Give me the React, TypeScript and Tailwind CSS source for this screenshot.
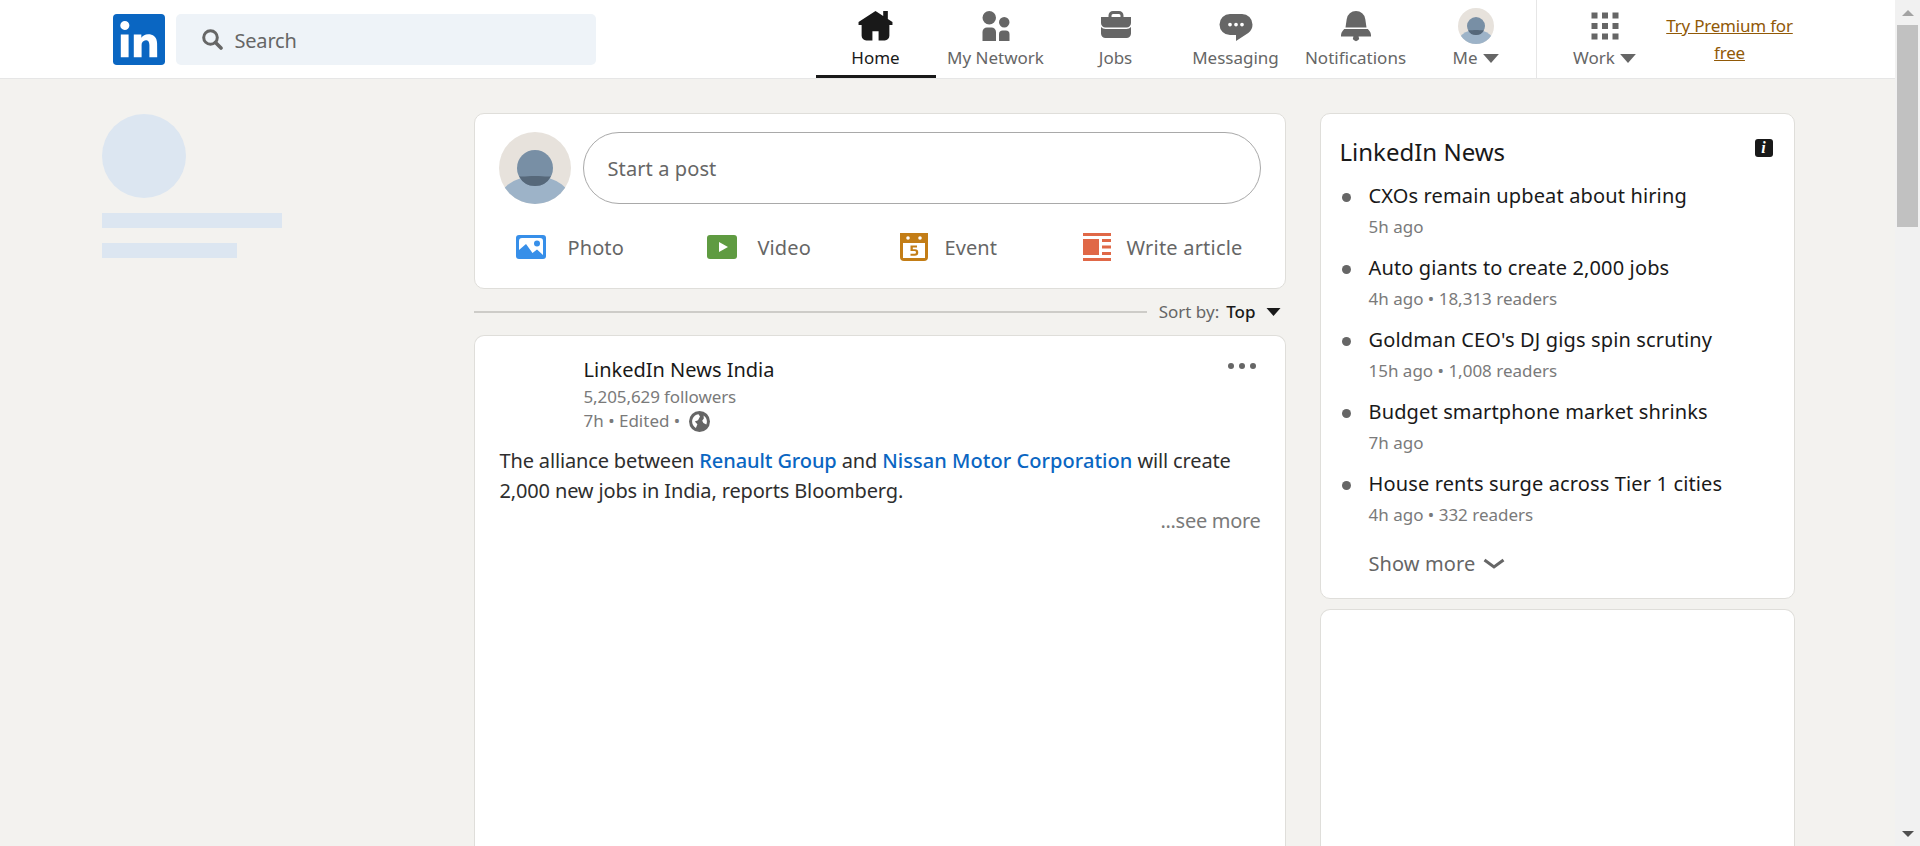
import React from "react";

const FONT = "font-['Noto_Sans','Open_Sans',sans-serif]";

function Icon({ d, className }: { d: string; className?: string }) {
  return (
    <svg viewBox="0 0 24 24" className={className} fill="currentColor">
      <path d={d} />
    </svg>
  );
}

const paths = {
  home: "M23 9v2h-2v7a3 3 0 01-3 3h-4v-6h-4v6H6a3 3 0 01-3-3v-7H1V9l11-7 5 3.18V2h3v5.09z",
  net: "M12 16v6H3v-6a3 3 0 013-3h3a3 3 0 013 3zm5.5-3A3.5 3.5 0 1014 9.5a3.5 3.5 0 003.5 3.5zm1 2h-2a2.5 2.5 0 00-2.5 2.5V22h7v-4.5a2.5 2.5 0 00-2.5-2.5zM7.5 2A4.5 4.5 0 1012 6.5 4.49 4.49 0 007.5 2z",
  jobs: "M17 6V5a3 3 0 00-3-3h-4a3 3 0 00-3 3v1H2v4a3 3 0 003 3h14a3 3 0 003-3V6zM9 5a1 1 0 011-1h4a1 1 0 011 1v1H9zm10 9a4 4 0 003-1.38V17a3 3 0 01-3 3H5a3 3 0 01-3-3v-4.38A4 4 0 005 14z",
  msg: "M16 4H8a7 7 0 000 14h4v4l8.16-5.39A6.78 6.78 0 0023 11a7 7 0 00-7-7zm-8 8.25A1.25 1.25 0 119.25 11 1.25 1.25 0 018 12.25zm4 0A1.25 1.25 0 1113.25 11 1.25 1.25 0 0112 12.25zm4 0A1.25 1.25 0 1117.25 11 1.25 1.25 0 0116 12.25z",
  bell: "M22 19h-8.28a2 2 0 11-3.44 0H2v-1a4.52 4.52 0 011.17-2.83l1-1.17h15.7l1 1.17A4.42 4.42 0 0122 18zM18.21 7.44A6.27 6.27 0 0012 2a6.27 6.27 0 00-6.21 5.44L5 13h14z",
  work: "M3 3h4v4H3zm7 4h4V3h-4zm7-4v4h4V3zM3 14h4v-4H3zm7 0h4v-4h-4zm7 0h4v-4h-4zM3 21h4v-4H3zm7 0h4v-4h-4zm7 0h4v-4h-4z",
};

function Avatar({ className, id }: { className?: string; id: string }) {
  return (
    <svg viewBox="0 0 72 72" className={className}>
      <defs>
        <clipPath id={id}>
          <circle cx="36" cy="36" r="36" />
        </clipPath>
      </defs>
      <g clipPath={`url(#${id})`}>
        <rect width="72" height="72" fill="#e7e2dc" />
        <ellipse cx="36" cy="73" rx="38" ry="29" fill="#9db3c8" />
        <circle cx="36" cy="36" r="18" fill="#788fa5" />
        <path d="M20 44.3 C 24 45 29 44 36 44 C 43 44 48 45 52 44.3 A 18 18 0 0 1 20 44.3 Z" fill="#56687a" />
      </g>
    </svg>
  );
}

function Caret({ className }: { className?: string }) {
  return (
    <svg viewBox="0 0 14 8" className={className} fill="currentColor">
      <path d="M0 0h14L7 8z" />
    </svg>
  );
}

function NavItem({ icon, label, active }: { icon: React.ReactNode; label: React.ReactNode; active?: boolean }) {
  return (
    <div className={`w-[120px] h-[78px] flex flex-col items-center pt-[10px] border-b-[3px] ${active ? "border-[#191919] text-[#191919]" : "border-transparent text-[#666666]"}`}>
      <div className="h-[32px] flex items-center justify-center">{icon}</div>
      <div className="mt-[4px] text-[17px] leading-[24px] flex items-center gap-[5px] whitespace-nowrap">{label}</div>
    </div>
  );
}

function Header() {
  return (
    <header className="h-[79px] bg-white border-b border-[#e6e6e6] shrink-0">
      <div className="w-[1692px] mx-auto flex h-[78px]">
        <div className="ml-[11px] mt-[14px] w-[52px] h-[51px] shrink-0">
          <svg viewBox="2 2 20 20" preserveAspectRatio="none" className="w-[52px] h-[51px]">
            <path fill="#0a66c2" d="M20.5 2h-17A1.5 1.5 0 002 3.5v17A1.5 1.5 0 003.5 22h17a1.5 1.5 0 001.5-1.5v-17A1.5 1.5 0 0020.5 2z" />
            <path fill="#fff" d="M8 19H5v-9h3zM6.5 8.25A1.75 1.75 0 118.3 6.5a1.78 1.78 0 01-1.8 1.75zM19 19h-3v-4.74c0-1.42-.6-1.93-1.38-1.93A1.74 1.74 0 0013 14.19a.66.66 0 000 .14V19h-3v-9h2.9v1.3a3.11 3.11 0 012.7-1.4c1.55 0 3.36.86 3.36 3.66z" />
          </svg>
        </div>
        <div className="ml-[11px] mt-[14px] w-[420px] h-[51px] shrink-0 bg-[#eef3f8] rounded-[5px] flex items-center pl-[26px] text-[#666666]">
          <svg viewBox="0 0 21 21" className="w-[21px] h-[21px]" fill="none" stroke="#666666">
            <circle cx="8.5" cy="8.5" r="6.8" strokeWidth="3" />
            <path d="M13.5 13.5 L19 19" strokeWidth="3.6" strokeLinecap="round" />
          </svg>
          <span className="ml-[12px] mt-[2px] text-[20px] tracking-[-0.2px]">Search</span>
        </div>
        <nav className="ml-[220px] flex shrink-0">
          <NavItem active label="Home" icon={<Icon d={paths.home} className="w-[37px] h-[37px]" />} />
          <NavItem label="My Network" icon={<Icon d={paths.net} className="w-[36px] h-[36px]" />} />
          <NavItem label="Jobs" icon={<Icon d={paths.jobs} className="w-[36px] h-[36px]" />} />
          <NavItem label="Messaging" icon={<Icon d={paths.msg} className="w-[36px] h-[36px]" />} />
          <NavItem label="Notifications" icon={<Icon d={paths.bell} className="w-[36px] h-[36px]" />} />
          <NavItem label={<>Me<Caret className="w-[16px] h-[9px]" /></>} icon={<Avatar id="av-small" className="w-[36px] h-[36px]" />} />
          <div className="border-l border-[#e6e6e6] w-[129px] pl-[8px]">
            <NavItem label={<>Work<Caret className="w-[16px] h-[9px]" /></>} icon={<Icon d={paths.work} className="w-[36px] h-[36px]" />} />
          </div>
        </nav>
        <a className="w-[130px] shrink-0 mt-[12px] text-center text-[17px] leading-[27px] text-[#915907] underline tracking-[-0.2px]">Try Premium for free</a>
      </div>
    </header>
  );
}

function Card({ className, children }: { className?: string; children?: React.ReactNode }) {
  return <section className={`bg-white border border-[#dfdeda] rounded-[10px] ${className ?? ""}`}>{children}</section>;
}

function PhotoIcon() {
  return (
    <svg viewBox="0 0 30 24" className="w-[30px] h-[24px]">
      <rect width="30" height="24" rx="3" fill="#378fe9" />
      <path d="M3 6 V15 L10 9 L16.5 18 L21 14.5 L27 20 V6 Q27 3 24 3 H6 Q3 3 3 6 Z" fill="#fff" />
      <circle cx="21" cy="8.5" r="3" fill="#378fe9" />
    </svg>
  );
}

function VideoIcon() {
  return (
    <svg viewBox="0 0 30 24" className="w-[30px] h-[24px]">
      <rect width="30" height="24" rx="3" fill="#5f9b41" />
      <path d="M12 7 L21 12 L12 17 Z" fill="#fff" />
    </svg>
  );
}

function EventIcon() {
  return (
    <svg viewBox="0 0 28 28" className="w-[28px] h-[28px]">
      <path d="M0 0 H28 V24 A4 4 0 0 1 24 28 H4 A4 4 0 0 1 0 24 Z" fill="#c37d16" />
      <rect x="3" y="10" width="22" height="15" fill="#fff" />
      <circle cx="8" cy="5" r="1.8" fill="#fff" />
      <circle cx="20" cy="5" r="1.8" fill="#fff" />
      <path d="M10.5 12.5 H17 V14.5 H12.8 V16.3 H15 A3.2 3.2 0 0 1 15 22.8 H10.5 V20.8 H14.6 A1.4 1.4 0 0 0 14.6 18 H10.5 Z" fill="#c37d16" />
    </svg>
  );
}

function ArticleIcon() {
  return (
    <svg viewBox="0 0 28 28" className="w-[28px] h-[28px]" fill="#e06847">
      <rect x="0" y="0" width="28" height="3" />
      <rect x="0" y="25" width="28" height="3" />
      <rect x="0" y="6" width="16" height="16" />
      <rect x="19" y="6" width="9" height="3" />
      <rect x="19" y="12.5" width="9" height="3" />
      <rect x="19" y="19" width="9" height="3" />
    </svg>
  );
}

function Action({ icon, label, className }: { icon: React.ReactNode; label: string; className?: string }) {
  return (
    <div className={`flex items-center text-[20px] text-[#666666] ${className ?? ""}`}>
      {icon}
      <span className="mt-[2px]">{label}</span>
    </div>
  );
}

function Globe() {
  return (
    <svg viewBox="0 0 21 21" className="w-[21px] h-[21px] ml-[9px]">
      <circle cx="10.5" cy="10.5" r="10.5" fill="#666666" />
      <path d="M9.5 3.2 C5.8 3.7 3.1 6.8 3.1 10.5 C3.1 13.2 4.6 15.6 6.9 16.9 L8.4 13.2 L5.8 10.4 L9 9.2 L11 5.4 Z" fill="#fff" />
      <path d="M14.6 4.4 C16.6 5.7 17.9 8 17.9 10.5 C17.9 11.6 17.7 12.6 17.3 13.5 L14.4 12 L13.2 9.8 L14.8 7.4 Z" fill="#fff" />
    </svg>
  );
}

function NewsItem({ title, sub }: { title: string; sub: string }) {
  return (
    <li className="flex h-[72px]">
      <span className="w-[9px] h-[9px] rounded-full bg-[#666666] ml-[21px] mt-[12px] shrink-0" />
      <div className="ml-[18px]">
        <div className="text-[20px] leading-[30px] text-[#191919] tracking-[0.14px] whitespace-nowrap">{title}</div>
        <div className="text-[17px] leading-[24px] mt-[4px] text-[#7a7a7a] whitespace-nowrap">{sub}</div>
      </div>
    </li>
  );
}

function Scrollbar() {
  return (
    <div className="w-[25px] shrink-0 bg-[#f1f1f1] flex flex-col items-center">
      <div className="h-[25px] flex items-center justify-center">
        <div className="w-0 h-0 border-x-[6px] border-x-transparent border-b-[6px] border-b-[#a3a3a3]" />
      </div>
      <div className="w-[21px] h-[202px] bg-[#c1c1c1]" />
      <div className="flex-1" />
      <div className="h-[25px] flex items-center justify-center">
        <div className="w-0 h-0 border-x-[6px] border-x-transparent border-t-[6px] border-t-[#505050]" />
      </div>
    </div>
  );
}

export default function App() {
  return (
    <div className={`h-[846px] overflow-hidden flex bg-[#f3f2ef] ${FONT}`}>
      <div className="flex-1 min-w-0 flex flex-col">
        <Header />
        <main className="w-[1692px] mx-auto flex pt-[34px] flex-1 min-h-0">
          <aside className="w-[372px] shrink-0 pt-px">
            <div className="w-[84px] h-[84px] rounded-full bg-[#dce6f1]" />
            <div className="mt-[15px] w-[180px] h-[15px] bg-[#dce6f1]" />
            <div className="mt-[15px] w-[135px] h-[15px] bg-[#dce6f1]" />
          </aside>

          <div className="w-[812px] shrink-0 flex flex-col">
            <Card className="h-[176px] px-[24px] pt-[18px]">
              <div className="flex gap-[12px]">
                <Avatar id="av-large" className="w-[72px] h-[72px] shrink-0" />
                <div className="flex-1 h-[72px] rounded-[36px] border border-[#a9a9a9] flex items-center pl-[24px] text-[20px] text-[#666666] tracking-[0.1px]">
                  <span className="mt-[2px]">Start a post</span>
                </div>
              </div>
              <div className="flex mt-[29px] h-[28px]">
                <Action className="ml-[17px] w-[191px] gap-[22px] tracking-[0.1px]" icon={<PhotoIcon />} label="Photo" />
                <Action className="w-[193px] gap-[21px] tracking-[0.1px]" icon={<VideoIcon />} label="Video" />
                <Action className="w-[183px] gap-[17px] tracking-[0.1px]" icon={<EventIcon />} label="Event" />
                <Action className="gap-[16px] tracking-[0.2px]" icon={<ArticleIcon />} label="Write article" />
              </div>
            </Card>

            <div className="h-[46px] flex items-center">
              <div className="flex-1 h-[2px] bg-[#cdccc8] mr-[12px]" />
              <span className="text-[17px] text-[#666666]">Sort by:</span>
              <span className="ml-[7px] text-[17px] text-[#191919] font-medium">Top</span>
              <Caret className="w-[15px] h-[8px] ml-[10px] mr-[5px] text-[#191919]" />
            </div>

            <Card className="flex-1 rounded-b-none border-b-0 relative pt-[20px]">
              <div className="ml-[109px]">
                <div className="text-[20px] leading-[28px] text-[#191919]">LinkedIn News India</div>
                <div className="mt-[1px] text-[17px] leading-[23px] text-[#7a7a7a] tracking-[-0.1px]">5,205,629 followers</div>
                <div className="mt-[1px] flex items-center text-[17px] leading-[24px] text-[#7a7a7a]">7h • Edited • <Globe /></div>
              </div>
              <div className="absolute right-[29px] top-[27px] flex gap-[5px]">
                <span className="w-[6px] h-[6px] rounded-full bg-[#666666]" />
                <span className="w-[6px] h-[6px] rounded-full bg-[#666666]" />
                <span className="w-[6px] h-[6px] rounded-full bg-[#666666]" />
              </div>
              <p className="mt-[13px] ml-[25px] mr-[24px] text-[20px] leading-[30px] text-[#2e2e2e] tracking-[-0.15px]">
                The alliance between <span className="text-[#0a66c2] font-medium tracking-[-0.1px]">Renault Group</span> and <span className="text-[#0a66c2] font-medium tracking-[0.05px]">Nissan Motor Corporation</span> will create
                <br />2,000 new jobs in India, reports Bloomberg.
              </p>
              <div className="mr-[24px] text-right text-[20px] leading-[30px] text-[#7a7a7a] tracking-[-0.3px]">...see more</div>
            </Card>
          </div>

          <div className="w-[475px] ml-[34px] shrink-0 flex flex-col gap-[10px]">
            <Card className="h-[486px] relative pt-[22px]">
              <div className="ml-[19px] text-[24px] leading-[32px] text-[#191919]">LinkedIn News</div>
              <div className="absolute right-[21px] top-[25px] w-[18px] h-[18px] rounded-[3px] bg-[#191919] text-white flex items-center justify-center text-[16px] font-bold italic leading-none font-['Liberation_Serif',serif]">i</div>
              <ul className="mt-[13px]">
                <NewsItem title="CXOs remain upbeat about hiring" sub="5h ago" />
                <NewsItem title="Auto giants to create 2,000 jobs" sub="4h ago • 18,313 readers" />
                <NewsItem title="Goldman CEO's DJ gigs spin scrutiny" sub="15h ago • 1,008 readers" />
                <NewsItem title="Budget smartphone market shrinks" sub="7h ago" />
                <NewsItem title="House rents surge across Tier 1 cities" sub="4h ago • 332 readers" />
              </ul>
              <div className="ml-[48px] mt-[8px] flex items-center text-[20px] leading-[30px] text-[#666666] tracking-[0.1px]">
                Show more
                <svg viewBox="0 0 21 12" className="w-[22px] h-[12px] ml-[8px]" fill="none" stroke="#666666" strokeWidth="3">
                  <path d="M1 2 L10.5 9 L20 2" />
                </svg>
              </div>
            </Card>
            <Card className="flex-1 rounded-b-none border-b-0" />
          </div>
        </main>
      </div>
      <Scrollbar />
    </div>
  );
}
